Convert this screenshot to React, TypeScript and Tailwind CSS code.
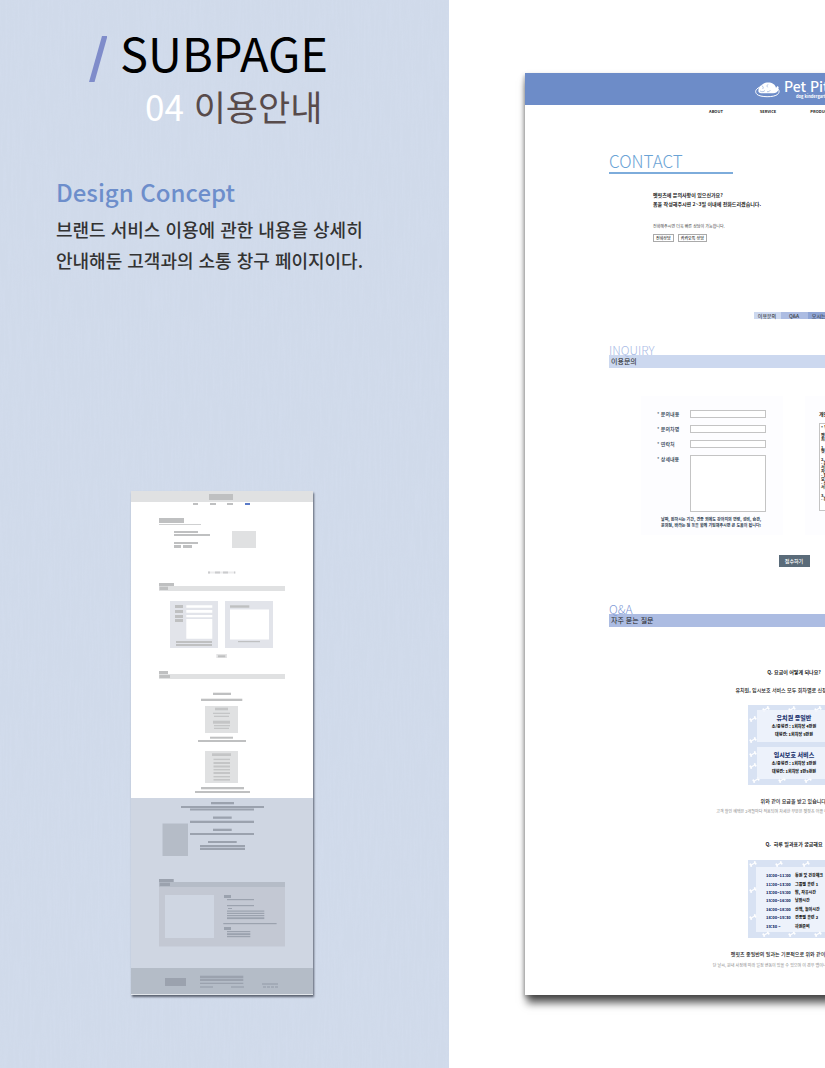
import React from "react";

type Bar = [number, number, number, number];

const midBars: Bar[] = [
  [78, 3, 24, 6], [62, 12, 5, 2], [79, 12, 6, 2], [96, 12, 6, 2],
  [28, 27, 25, 5], [43, 40, 24, 2], [43, 43, 36, 2], [43, 51, 24, 2],
  [43, 54, 7, 3], [52, 54, 9, 3],
  [28, 92, 15, 3], [28.5, 95.7, 8.5, 3.3],
  [44, 114, 8, 3], [44, 119, 8, 3], [44, 124, 8, 3], [44, 128, 8, 3],
  [45, 150, 36, 2], [45, 153, 36, 2], [99, 114.3, 19.3, 2.4], [107, 150, 22, 1.2],
  [87, 164.3, 7.3, 2], [28, 180, 9, 3], [28.3, 184, 10.7, 3],
  [82, 201.7, 18, 2.3], [70, 207.7, 41.3, 2.3], [79, 245.7, 23, 2], [67, 249, 48, 2],
  [70, 296, 43, 2.3], [64, 300, 55, 2],
];

const boxBars: Bar[] = [
  [84, 216.7, 13, 2.6], [82, 221.7, 17, 1.3], [83, 224.7, 15, 1.3], [82, 229.7, 17, 3],
  [83, 234, 16, 1.3], [83, 236.7, 15, 1.3], [81, 262.3, 19, 2.7], [82.5, 267.7, 16.5, 1.4],
  [82.5, 271, 16.5, 2], [82.5, 274.5, 16.5, 2], [82.5, 278, 16.5, 1.4], [82.5, 281, 16.5, 2],
  [82.5, 285, 16.5, 1.4], [82.5, 288, 16.5, 1.6],
];

const lowBars: Bar[] = [
  [80, 311, 23, 2.3], [50, 315, 83, 2], [59, 317.5, 64, 2], [82, 325.5, 18.7, 2.3],
  [59, 329.7, 64, 2.3], [82, 337.7, 18.7, 2.3], [59, 342, 64, 2], [77, 350, 28.7, 2],
  [69, 354, 45, 2.3], [69, 357, 45, 2], [28, 388, 14.7, 3], [28.7, 391.7, 10.3, 3.3],
  [93, 404, 7, 3], [96, 408, 27, 1.2], [96, 414, 27, 1.2], [97, 417, 4, 1],
  [96, 419.5, 37.3, 1.2], [96, 421.8, 37.3, 1.2], [96, 424, 37.3, 1.2], [96, 426.3, 37.3, 1.8],
  [92.3, 432, 53.3, 1.2], [93, 436, 7, 3], [96, 440, 23.3, 1.2], [96, 442.2, 23.3, 2],
  [96, 445, 23.3, 1.2], [34, 487, 21, 8], [69, 484.7, 43.3, 2.3], [69, 487.7, 43.3, 2.3],
  [69, 491.7, 43.3, 1.3],
];

const footBars: Bar[] = [
  [69, 495, 13, 2], [100, 495, 13, 2], [131, 492, 16, 2],
  [132, 495, 3, 2], [136, 495, 3, 2], [140, 495, 3, 2], [144, 495, 3, 2],
];

function Bars({ bars, fill }: { bars: Bar[]; fill: string }) {
  return (
    <g fill={fill}>
      {bars.map(([x, y, w, h], i) => (
        <rect key={i} x={x} y={y} width={w} height={h} />
      ))}
    </g>
  );
}

function Wireframe() {
  return (
    <svg
      viewBox="0 0 182 504"
      role="img"
      aria-label="페이지 와이어프레임"
      className="block w-[182px] bg-white shadow-[1px_2px_2px_#5b6270]"
    >
      <rect width="182" height="11" fill="#e0e1e2" />
      <rect x="114" y="12" width="5" height="2" fill="#5a7bc8" />
      <rect x="28" y="33" width="42" height="1" fill="#cfd0d1" />
      <rect x="101" y="40" width="24" height="17" fill="#e0e1e2" />
      <rect x="77" y="80.5" width="28" height="2" fill="#ececed" />
      <path d="M77 80.5h2v2h-2zM84 80.5h5v2h-5zM92 80.5h5v2h-5zM103 80.5h1v2h-1z" fill="#cbcccd" />
      <rect x="28" y="95" width="126" height="5" fill="#e0e1e2" />
      <rect x="39" y="110" width="48" height="47" fill="#e2e4ea" />
      <rect x="94" y="110" width="48" height="47" fill="#e2e4ea" />
      <path
        d="M55.3 114.3h26v2.4h-26zM55.3 119h26v2.7h-26zM55.3 124h26v2.2h-26zM55.3 128h26v19.7h-26zM99 118.5h39v30h-39z"
        fill="#fff"
      />
      <rect x="85.3" y="163" width="10.7" height="4" fill="#e4e4e5" />
      <rect x="28" y="183" width="126" height="5" fill="#e0e1e2" />
      <rect x="74" y="215" width="33" height="27" fill="#e0e1e2" />
      <rect x="74" y="260" width="33" height="32" fill="#e0e1e2" />
      <Bars bars={midBars} fill="#bfc0c1" />
      <Bars bars={boxBars} fill="#c4c5c6" />
      <rect y="307" width="182" height="197" fill="#cfd6e2" />
      <rect x="31.5" y="332.5" width="25.5" height="32.5" fill="#b5bcc7" />
      <rect x="28" y="391" width="126" height="64.5" fill="#c3c8d3" />
      <rect x="28" y="391" width="126" height="5" fill="#b5bcc7" />
      <rect x="34" y="404" width="49" height="43" fill="#cfd6e2" />
      <rect y="477" width="182" height="26" fill="#b4bcc7" />
      <rect y="503" width="182" height="1" fill="#e3e7ec" />
      <Bars bars={lowBars} fill="#9ba2ae" />
      <Bars bars={footBars} fill="#a3abb7" />
    </svg>
  );
}

function Grain() {
  return (
    <svg aria-hidden="true" className="absolute inset-0 h-full w-full opacity-40">
      <filter id="brushed" x="0" y="0" width="100%" height="100%">
        <feTurbulence type="fractalNoise" baseFrequency="0.5 0.025" numOctaves="3" seed="4" />
        <feColorMatrix values="0 0 0 0 0.66  0 0 0 0 0.73  0 0 0 0 0.86  2.6 0 0 0 -1" />
      </filter>
      <rect width="100%" height="100%" filter="url(#brushed)" />
    </svg>
  );
}

function DogLogo() {
  return (
    <svg viewBox="0 0 75 54" aria-hidden="true" className="h-[18px] w-[25px]" fill="none" stroke="#fff">
      <path d="M13 22C1 28-1 36 6 43c9 9 51 10 62 0 7-7 5-14-3-20" strokeWidth="3" />
      <path
        d="M10 33c0-11 6-17 14-21 8-5 22-6 31 0 5 3 8 8 8 13l4-7 4 3-2 11c-4 7-13 8-20 8H23c-8 0-13-3-13-7z"
        fill="#fff"
        stroke="none"
      />
      <path d="M20 17c5 2 6 6 3 10m16-14c-4 3-3 7-1 9M15 33c7 4 12 2 15-2m6 4c4 1 8-1 10-4" stroke="#6d8cc8" strokeWidth="1.5" />
    </svg>
  );
}

function Bones({ spots, height }: { spots: [number, number][]; height: number }) {
  return (
    <svg viewBox={"0 0 92 " + height} aria-hidden="true" className="absolute inset-0 h-full w-full">
      {spots.map(([x, y], i) => (
        <g key={i} transform={`translate(${x} ${y}) rotate(-28)`} fill="#fff">
          <rect x="-2.5" y="-0.6" width="5" height="1.2" />
          <circle cx="-2.5" cy="-0.9" r="1" />
          <circle cx="-2.5" cy="0.9" r="1" />
          <circle cx="2.5" cy="-0.9" r="1" />
          <circle cx="2.5" cy="0.9" r="1" />
        </g>
      ))}
    </svg>
  );
}

function SectionTitle({ en, ko, tone }: { en: string; ko: string; tone: "light" | "deep" }) {
  const deep = tone === "deep";
  return (
    <div>
      <h2
        className={
          deep
            ? "text-[12px] leading-[10px] font-light text-[#7f9ad6]"
            : "text-[12px] leading-[10px] font-light text-[#a9bbe6]"
        }
      >
        {en}
      </h2>
      <p
        className={
          deep
            ? "h-[13px] bg-[#acbce2] pl-[2px] text-[7px] leading-[13px]"
            : "h-[13px] bg-[#ccd8ef] pl-[2px] text-[7px] leading-[13px]"
        }
      >
        {ko}
      </p>
    </div>
  );
}

const fields = ["문의내용", "문의차명", "연락처"];

const terms = [
  "* 펫핏츠 개인정보 수집 및 이용 안내",
  "",
  "펫핏츠는 원활한 상담을 위해 아래와 같이",
  "최소한의 개인정보를 수집합니다.",
  "",
  "1. 수집 목적",
  "펫핏츠 서비스 문의 상담",
  "",
  "2. 수집 항목",
  "- 문의내용, 연락처",
  "서비스 이용 과정에서 아래 정보가",
  "자동으로 생성될 수 있습니다.",
  "- 접속 로그, 쿠키",
  "보호자 성함과 반려견 정보",
  "- 상담 내용",
  "서비스 이용 기록",
  "",
  "3. 보유 기간",
  "- 목적 달성 후 즉시 파기",
];

const prices = [
  { name: "유치원 종일반", rows: ["소/중형견 : 1회차당 4만원", "대형견: 1회차당 5만원"] },
  { name: "임시보호 서비스", rows: ["소/중형견 : 1회차당 3만원", "대형견: 1회차당 3만5천원"] },
];

const schedule = [
  ["10:00~11:00", "등원 및 건강체크"],
  ["11:00~13:00", "그룹별 훈련 1"],
  ["13:00~15:00", "밥, 자유시간"],
  ["15:00~16:00", "낮잠시간"],
  ["16:00~18:00", "산책, 놀이시간"],
  ["18:00~19:30", "견종별 훈련 2"],
  ["19:30 ~", "하원준비"],
];

function ContactPage() {
  return (
    <article className="w-[538px] shrink-0 bg-white pb-[27px] text-[5px] leading-[8px] text-[#222] shadow-[2px_8px_8px_rgba(0,0,0,0.65),-1px_2px_4px_rgba(0,0,0,0.25)]">
      <header className="flex h-8 items-center bg-[#6d8cc8] pl-[230px] text-white">
        <DogLogo />
        <div className="flex flex-col pl-1">
          <span className="text-[14px] leading-[15px] font-medium whitespace-nowrap">Pet Pitz</span>
          <span className="pl-3 text-[4px] leading-[5px] font-bold whitespace-nowrap">dog kindergarten</span>
        </div>
      </header>
      <nav className="flex h-3 items-center justify-center text-[4px] font-bold">
        {["ABOUT", "SERVICE", "PRODUCT", "CONTACT"].map((item) => (
          <a key={item} href="#contact" className="w-[52px] text-center">
            {item}
          </a>
        ))}
      </nav>

      <div className="px-21">
        <h1
          id="contact"
          className="mt-[34px] w-31 border-b-2 border-[#7dacdb] pb-px text-[17px] leading-[20px] font-light text-[#6aa3d5]"
        >
          CONTACT
        </h1>
        <div className="flex items-end justify-between pl-11">
          <div>
            <p className="mt-4 leading-[9px] font-bold">
              멧핏츠에 문의사항이 있으신가요?
              <br />
              폼을 작성해주시면 2~3일 이내에 전화드리겠습니다.
            </p>
            <p className="mt-[15px] text-[4px] leading-[6px] text-[#444]">전화해주시면 더욱 빠른 상담이 가능합니다.</p>
            <div className="mt-[5px] flex gap-1 text-[4px] leading-[6px] font-medium">
              <button type="button" className="border border-[#aaa] px-[2px]">전화상담</button>
              <button type="button" className="border border-[#aaa] px-[2px]">카카오톡 상담</button>
            </div>
          </div>
          <svg viewBox="0 0 70 26" aria-hidden="true" className="mb-px h-[26px] w-[72px] shrink-0">
            <ellipse cx="4" cy="20" rx="4" ry="4" fill="#e3a56b" />
            <circle cx="38" cy="13" r="12" fill="#e3a56b" />
          </svg>
        </div>

        <div className="mt-[70px] flex h-[7px] justify-center text-center text-[5px] leading-[7px]">
          <a href="#inquiry" className="w-[27px] bg-[#ccd8ef]">이용문의</a>
          <a href="#qna" className="w-[27px] bg-[#acbce2]">Q&amp;A</a>
          <a href="#way" className="w-[27px] bg-[#8fa5d5]">오시는길</a>
        </div>

        <section id="inquiry" className="mt-[26px]">
          <SectionTitle en="INQUIRY" ko="이용문의" tone="light" />
          <form className="mt-7">
            <div className="flex justify-center gap-[22px]">
              <div className="flex h-[139px] w-[142px] flex-col gap-[7px] bg-[#fdfdff] pt-[14px] pr-[17px] pl-4 text-[#2c3c50]">
                {fields.map((name) => (
                  <label key={name} className="flex h-2 items-center justify-between font-medium">
                    * {name}
                    <input className="h-2 w-[76px] border border-[#c4c4c4] bg-white" />
                  </label>
                ))}
                <label className="flex justify-between font-medium">
                  * 상세내용
                  <textarea className="block h-[57px] w-[76px] resize-none border border-[#c4c4c4] bg-white" />
                </label>
                <p className="-mt-[3px] pl-1 text-[4px] leading-[6px] font-bold whitespace-nowrap">
                  날짜, 원하시는 기간, 견종 외에도 강아지의 연령, 성비, 습관,
                  <br />
                  문의점, 바라는 점 등을 함께 기입해주시면 큰 도움이 됩니다!
                </p>
              </div>
              <div className="h-[139px] w-[142px] bg-[#fdfdff] px-[14px] pt-[14px]">
                <h3 className="font-bold">개인정보 수집 및 이용</h3>
                <div className="mt-[5px] h-[88px] overflow-hidden border border-[#c4c4c4] bg-white py-px pl-px text-[4px] leading-[4px] font-bold">
                  {terms.map((line, i) => (
                    <p key={i} className="min-h-1 whitespace-nowrap">
                      {line}
                    </p>
                  ))}
                </div>
              </div>
            </div>
            <button type="button" className="mx-auto mt-5 block h-3 w-[31px] bg-[#5a6b79] leading-[12px] font-medium text-white">
              접수하기
            </button>
          </form>
        </section>

        <section id="qna" className="mt-[37px]">
          <SectionTitle en="Q&A" ko="자주 묻는 질문" tone="deep" />
          <div className="flex flex-col items-center whitespace-nowrap">
            <h3 className="mt-[41px] font-bold">Q. 요금이 어떻게 되나요?</h3>
            <p className="mt-[10px] font-medium">유치원, 임시보호 서비스 모두 회차별로 신청 가능합니다.</p>
            <div className="relative mt-[11px] flex h-20 w-[92px] flex-col gap-[5px] bg-[#d8e2f3] px-[9px] pt-[5px]">
              <Bones
                height={80}
                spots={[[18, 4], [44, 4], [70, 4], [5, 14], [5, 35], [5, 49], [5, 61], [8, 75], [34, 75], [60, 75], [87, 12], [87, 40], [87, 66]]}
              />
              {prices.map((plan) => (
                <div key={plan.name} className="relative h-8 bg-[#f1f5fc]/85 pt-1 text-center text-[4px] font-black">
                  <h4 className="text-[6px] text-[#24356f]">{plan.name}</h4>
                  {plan.rows.map((row) => (
                    <p key={row}>{row}</p>
                  ))}
                </div>
              ))}
            </div>
            <p className="mt-3 font-medium">위와 같이 요금을 받고 있습니다.</p>
            <p className="mt-[3px] text-[4px] leading-[6px] text-[#888]">
              고객 할인 혜택은 2개월마다 적용되며 자세한 부분은 펫핏츠 어플 내 공지사항을 참고해주세요.
            </p>

            <h3 className="mt-[26px] font-bold">Q.&nbsp; 하루 일과표가 궁금해요</h3>
            <div className="relative mt-3 h-[78px] w-[92px] bg-[#d8e2f3] px-2 py-[7px]">
              <Bones
                height={78}
                spots={[[5, 4], [31, 4], [58, 4], [83, 4], [5, 30], [5, 57], [18, 74], [44, 74], [70, 74], [88, 28], [88, 55]]}
              />
              <div className="relative h-[65px] bg-[#f1f5fc]/85 pt-1 pl-[10px]">
                <table className="h-[59px] text-[4px] font-black">
                  <tbody>
                    {schedule.map(([time, task]) => (
                      <tr key={time}>
                        <th scope="row" className="min-w-[29px] p-0 text-left font-black text-[#24356f]">{time}</th>
                        <td className="p-0">{task}</td>
                      </tr>
                    ))}
                  </tbody>
                </table>
              </div>
            </div>
            <p className="mt-3 font-medium">펫핏츠 종일반의 일과는 기본적으로 위와 같이 진행이 됩니다.</p>
            <p className="mt-1 text-[4px] leading-[6px] text-[#888]">
              단 날씨, 원내 사정에 따라 일정 변동이 있을 수 있으며 이 경우 앱이나 문자로 미리 안내해드립니다.
            </p>
          </div>
        </section>
      </div>
    </article>
  );
}

export default function App() {
  return (
    <main
      lang="ko"
      className="flex min-h-screen overflow-hidden bg-white font-['Noto_Sans_CJK_KR','Noto_Sans',sans-serif]"
    >
      <section className="relative w-[449px] shrink-0 bg-[#d0daea]">
        <Grain />
        <div className="relative">
          <div className="pt-[22px] pl-[89px]">
            <h1 className="flex items-end gap-[13px] text-[47px] leading-[60px] text-black">
              <svg viewBox="0 0 18 46" aria-hidden="true" className="h-[46px] w-[18px] text-[#7f8cca]">
                <path d="M13 0H18.5L5.5 46H0z" fill="currentColor" />
              </svg>
              SUBPAGE
            </h1>
            <p className="mt-1 pl-14 text-[35px] leading-[40px] text-[#584b4b]">
              <span className="text-white">04</span> 이용안내
            </p>
          </div>
          <div className="mt-[46px] pl-14">
            <h2 className="text-[24px] leading-[40px] font-medium text-[#6d8ecb]">Design Concept</h2>
            <p className="mt-[2px] text-[18px] leading-[31px] font-medium text-[#333]">
              브랜드 서비스 이용에 관한 내용을 상세히
              <br />
              안내해둔 고객과의 소통 창구 페이지이다.
            </p>
          </div>
          <div className="mt-[215px] pb-[72px] pl-[131px]">
            <Wireframe />
          </div>
        </div>
      </section>
      <section className="flex min-w-0 flex-1 items-start overflow-hidden pt-[73px] pl-19">
        <ContactPage />
      </section>
    </main>
  );
}
